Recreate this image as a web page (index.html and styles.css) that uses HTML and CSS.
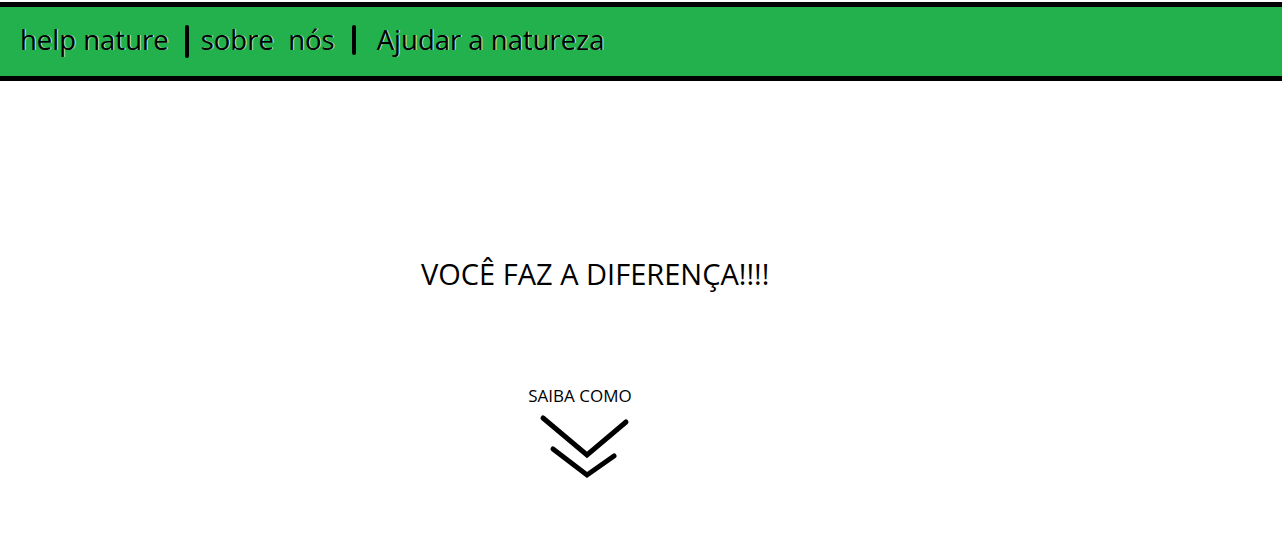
FILE: index.html
```html
<!DOCTYPE html>
<html lang="pt-BR">
<head>
<meta charset="utf-8">
<title>help nature</title>
<link rel="stylesheet" href="styles.css">
</head>
<body>
<header class="topbar">
  <nav class="nav">
    <a class="nav-link brand" href="#">help nature</a>
    <span class="divider d1"></span>
    <a class="nav-link about" href="#">sobre&nbsp; nós</a>
    <span class="divider d2"></span>
    <a class="nav-link help" href="#">Ajudar a natureza</a>
  </nav>
</header>
<main class="hero">
  <h1 class="headline">VOCÊ FAZ A DIFERENÇA!!!!</h1>
  <a class="more" href="#">
    <span class="more-label">SAIBA COMO</span>
    <svg class="chevrons" width="100" height="70" viewBox="0 0 100 70" aria-hidden="true">
      <polyline points="12,9 56,46 95,13" fill="none" stroke="#000" stroke-width="5" stroke-linecap="round" stroke-linejoin="miter"/>
      <polyline points="22,40 56,66 83,47" fill="none" stroke="#000" stroke-width="5" stroke-linecap="round" stroke-linejoin="miter"/>
    </svg>
  </a>
</main>
</body>
</html>
```

FILE: styles.css
```css
html, body {
  margin: 0;
  padding: 0;
  background: #ffffff;
}

body {
  padding-top: 2px;
  font-family: "Open Sans", "Liberation Sans", sans-serif;
  color: #000;
}

.topbar {
  background: #22b14c;
  border-top: 5px solid #000;
  border-bottom: 5px solid #000;
  height: 69px;
  box-sizing: content-box;
}

.nav {
  display: flex;
  align-items: center;
  height: 100%;
  padding-left: 20px;
  padding-bottom: 4px;
  box-sizing: border-box;
}

.nav-link {
  color: #000;
  text-decoration: none;
  font-size: 27.5px;
  line-height: 1;
  text-shadow: 1px 0 0 rgba(255,255,255,0.7);
}

.divider {
  display: block;
  width: 4px;
  background: #000;
  border-radius: 2px;
}

.d1 {
  height: 33px;
  margin: 4px 12px 0 16px;
}

.d2 {
  height: 30px;
  margin: 0 21px 0 17px;
}

.hero {
  display: flex;
  flex-direction: column;
  padding-left: 421px;
  padding-top: 174px;
}

.headline {
  margin: 0;
  font-weight: 400;
  font-size: 29px;
  line-height: 38px;
}

.more {
  display: flex;
  flex-direction: column;
  align-items: center;
  width: 104px;
  margin-left: 107px;
  margin-top: 92px;
  color: #000;
  text-decoration: none;
}

.more-label {
  font-size: 17px;
  line-height: 22px;
}

.chevrons {
  display: block;
  margin-top: 2px;
  margin-left: 2px;
}
```
